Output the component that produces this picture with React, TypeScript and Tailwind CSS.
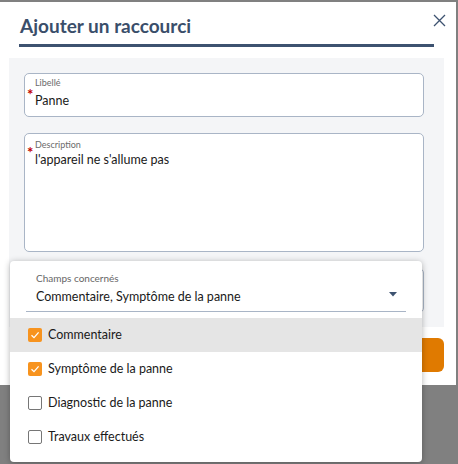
import React from 'react';

const font = { fontFamily: 'Lato, "Open Sans", sans-serif' };

function Check({ checked }: { checked: boolean }) {
  if (checked) {
    return (
      <span className="flex h-[14px] w-[14px] items-center justify-center rounded-[2px] bg-[#f7931e]">
        <svg width="10" height="10" viewBox="0 0 10 10">
          <path d="M1.5 5.2 L4 7.6 L8.6 2.4" fill="none" stroke="#fff" strokeWidth="1.3" />
        </svg>
      </span>
    );
  }
  return <span className="h-[14px] w-[14px] rounded-[2px] border-[1.5px] border-[#767676] bg-white" />;
}

export default function App() {
  const options = [
    { label: 'Commentaire', checked: true, active: true },
    { label: 'Symptôme de la panne', checked: true, active: false },
    { label: 'Diagnostic de la panne', checked: false, active: false },
    { label: 'Travaux effectués', checked: false, active: false },
  ];

  return (
    <div className="relative h-[464px] w-[458px] overflow-hidden bg-[#808080] pt-[2px]" style={font}>
      {/* dialog */}
      <div className="relative h-[383px] w-[456px] bg-white">
        <div className="flex items-start justify-between pl-[20px] pr-[10px] pt-[11px]">
          <h1 className="text-[19px] font-bold leading-[26px] text-[#3a4e6a]">Ajouter un raccourci</h1>
          <svg width="13" height="13" viewBox="0 0 13 13" className="mt-[1px]">
            <path d="M1 1 L12 12 M12 1 L1 12" stroke="#3d5270" strokeWidth="1.3" />
          </svg>
        </div>
        <div className="ml-[19px] mt-[5px] h-[3px] w-[415px] bg-[#3d5270]" />

        <div className="ml-[9px] mt-[11px] w-[435px] bg-[#f4f5f7] pb-[14px] pl-[15px] pr-[20px] pt-[15px]">
          <div className="relative h-[44px] rounded-[5px] border border-[#a9b5c6] bg-white pl-[10px] pt-[3px]">
            <div className="text-[9px] leading-[11px] text-[#6b6b6b]">Libellé</div>
            <span className="absolute left-[2px] top-[14px] text-[15px] font-bold leading-[13px] text-[#c00000]">*</span>
            <div className="mt-[5px] text-[12.5px] leading-[16px] text-[#1a1a1a]">Panne</div>
          </div>

          <div className="relative mt-[16px] h-[119px] rounded-[5px] border border-[#a9b5c6] bg-white pl-[10px] pt-[5px]">
            <div className="text-[9px] leading-[11px] text-[#6b6b6b]">Description</div>
            <span className="absolute left-[2px] top-[12px] text-[15px] font-bold leading-[13px] text-[#c00000]">*</span>
            <div className="mt-[2px] text-[12.5px] leading-[16px] text-[#1a1a1a]">l'appareil ne s'allume pas</div>
          </div>

          <div className="mt-[16px] h-[45px] rounded-[5px] border border-[#a9b5c6] bg-white" />
        </div>

        <div className="mr-[12px] mt-[11px] flex justify-end">
          <div className="flex h-[34px] w-[120px] items-center justify-center rounded-[6px] bg-[#e07a00] text-[13px] font-bold text-white">
            Enregistrer
          </div>
        </div>
      </div>

      {/* open select menu */}
      <div className="absolute left-[10px] top-[261px] w-[412px] rounded-[4px] bg-white pb-[8px] shadow-[0_1px_6px_rgba(0,0,0,0.3)]">
        <div className="mx-[16px] h-[51px] border-b border-[#a9b5c6] pl-[10px] pt-[11px]">
          <div className="text-[10px] leading-[12px] text-[#666]">Champs concernés</div>
          <div className="mt-[5px] flex items-center justify-between pr-[9px]">
            <span className="text-[12.5px] leading-[16px] text-[#1a1a1a]">Commentaire, Symptôme de la panne</span>
            <svg width="8" height="5" viewBox="0 0 8 5" className="-mt-[6px]">
              <path d="M0 0 L8 0 L4 4.5 Z" fill="#3d5270" />
            </svg>
          </div>
        </div>
        <div className="mt-[6px]">
          {options.map((o) => (
            <div
              key={o.label}
              className={`flex h-[34px] items-center gap-[6px] pl-[18px] text-[12.5px] text-[#1a1a1a] ${o.active ? 'bg-[#e5e5e5]' : ''}`}
            >
              <Check checked={o.checked} />
              <span>{o.label}</span>
            </div>
          ))}
        </div>
      </div>
    </div>
  );
}
